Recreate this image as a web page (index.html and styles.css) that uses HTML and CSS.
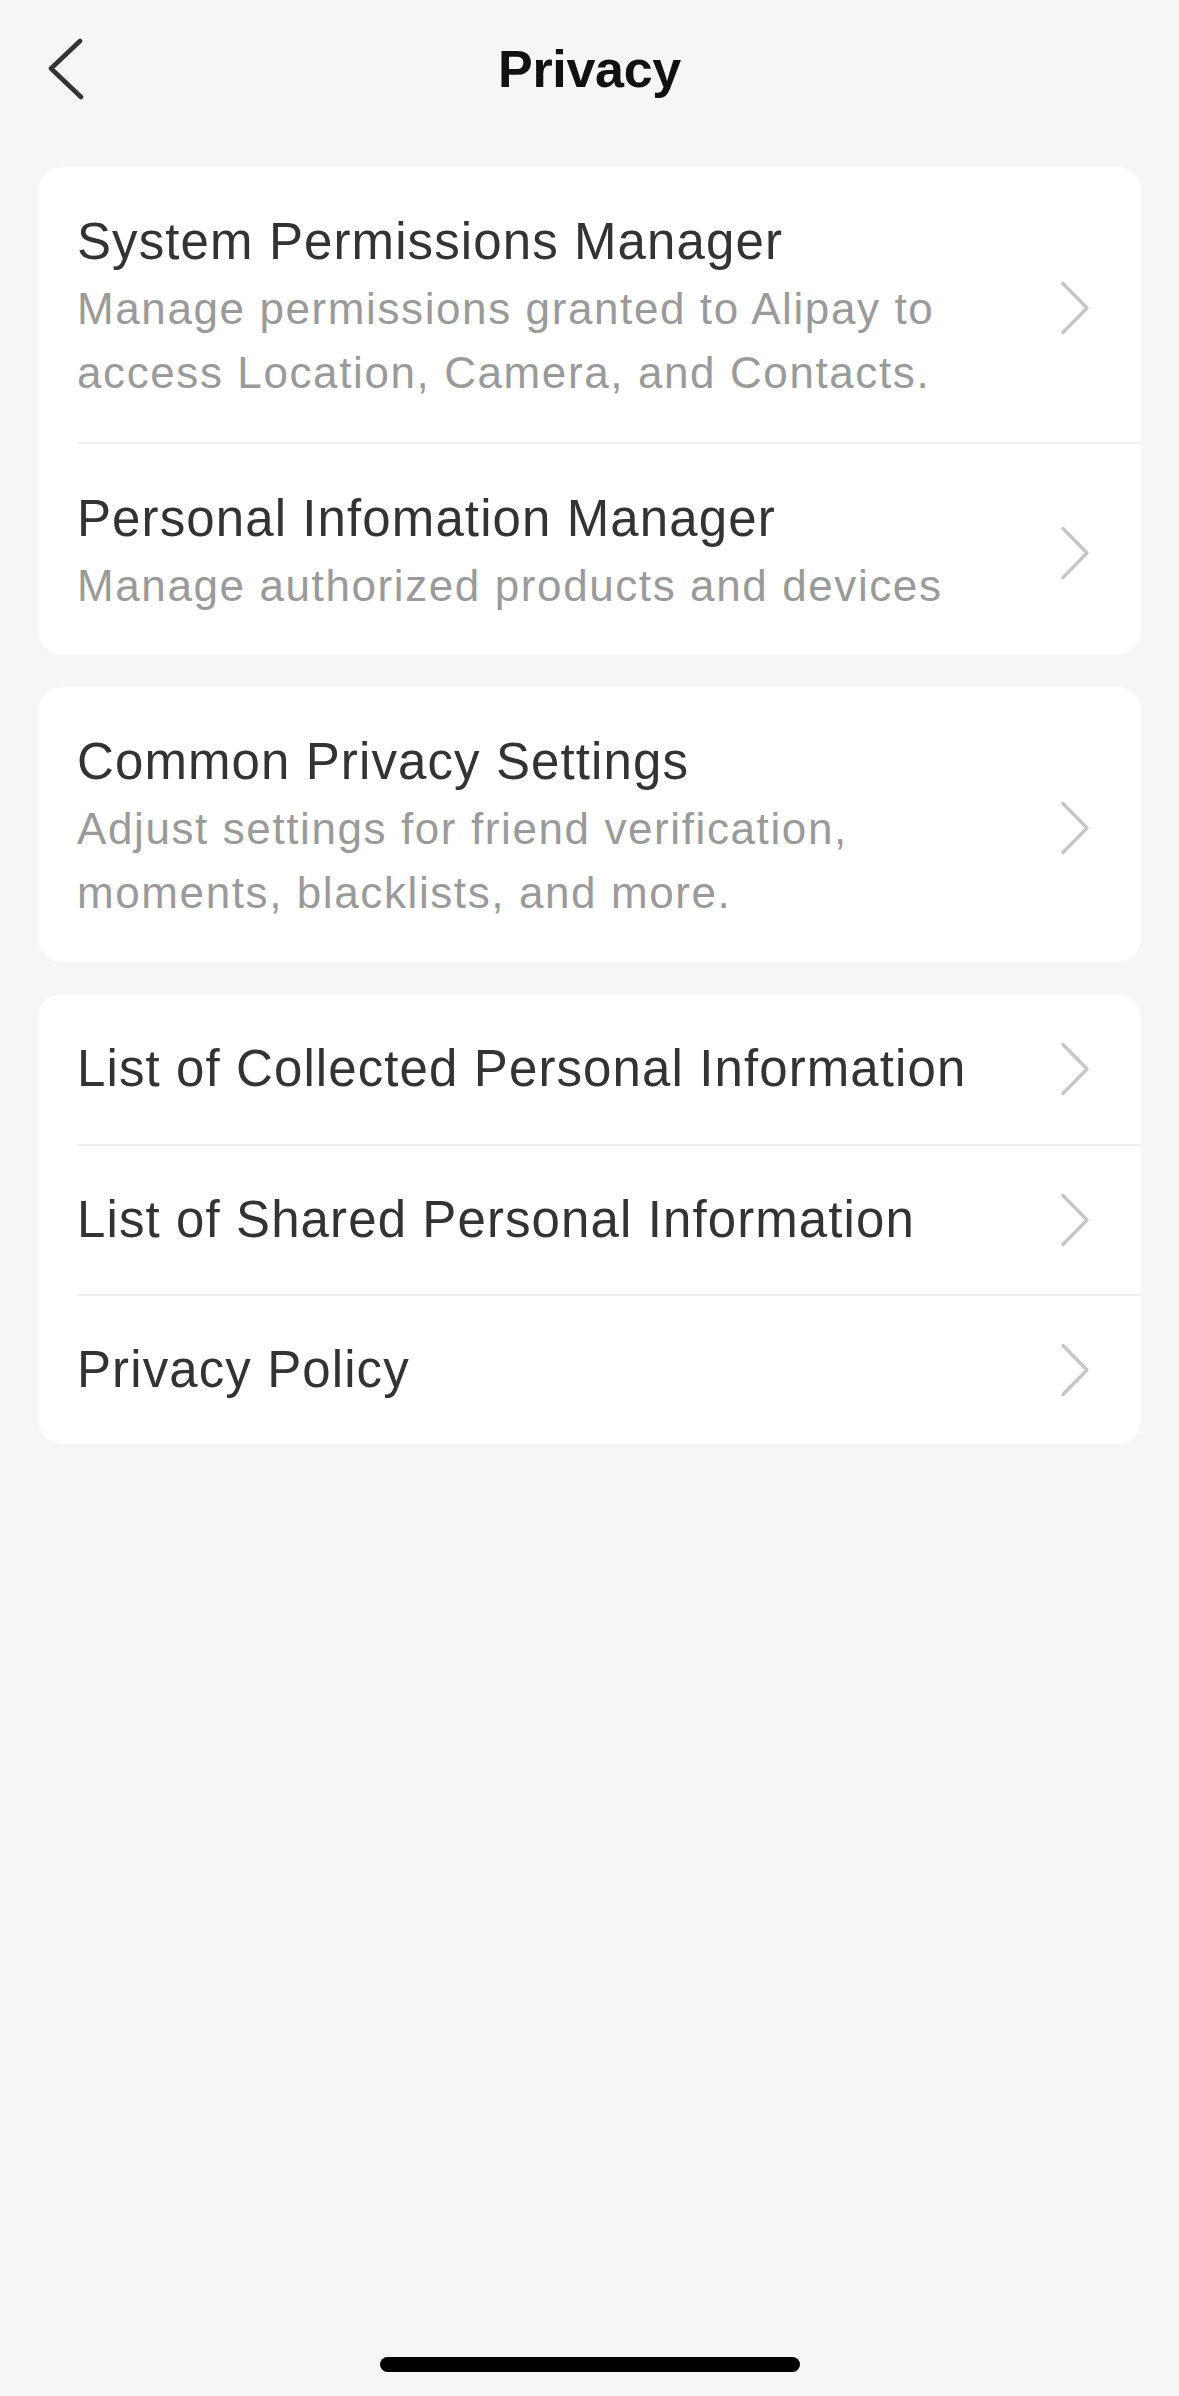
FILE: index.html
```html
<!DOCTYPE html>
<html lang="en">
<head>
<meta charset="utf-8">
<title>Privacy</title>
<link rel="stylesheet" href="styles.css">
</head>
<body>
<div class="page">
  <header class="topbar">
    <div class="back">
      <svg width="46" height="62" viewBox="0 0 46 62" aria-hidden="true">
        <path d="M37 3 L8 30.5 L38 59" fill="none" stroke="#333" stroke-width="4.6" stroke-linecap="round" stroke-linejoin="round"/>
      </svg>
    </div>
    <h1 class="title">Privacy</h1>
    <div class="spacer"></div>
  </header>

  <main class="content">
    <section class="card">
      <div class="row row-desc">
        <div class="text">
          <div class="row-title">System Permissions Manager</div>
          <div class="row-sub">Manage permissions granted to Alipay to access Location, Camera, and Contacts.</div>
        </div>
        <svg class="chev" width="34" height="54" viewBox="0 0 34 54" aria-hidden="true"><path d="M5 2.5 L29 27 L5 51.5" fill="none" stroke="#c6c6c6" stroke-width="3.4" stroke-linecap="round" stroke-linejoin="round"/></svg>
      </div>
      <div class="row row-desc">
        <div class="text">
          <div class="row-title">Personal Infomation Manager</div>
          <div class="row-sub">Manage authorized products and devices</div>
        </div>
        <svg class="chev" width="34" height="54" viewBox="0 0 34 54" aria-hidden="true"><path d="M5 2.5 L29 27 L5 51.5" fill="none" stroke="#c6c6c6" stroke-width="3.4" stroke-linecap="round" stroke-linejoin="round"/></svg>
      </div>
    </section>

    <section class="card">
      <div class="row row-desc">
        <div class="text">
          <div class="row-title">Common Privacy Settings</div>
          <div class="row-sub">Adjust settings for friend verification, moments, blacklists, and more.</div>
        </div>
        <svg class="chev" width="34" height="54" viewBox="0 0 34 54" aria-hidden="true"><path d="M5 2.5 L29 27 L5 51.5" fill="none" stroke="#c6c6c6" stroke-width="3.4" stroke-linecap="round" stroke-linejoin="round"/></svg>
      </div>
    </section>

    <section class="card">
      <div class="row row-simple">
        <div class="text">
          <div class="row-title">List of Collected Personal Information</div>
        </div>
        <svg class="chev" width="34" height="54" viewBox="0 0 34 54" aria-hidden="true"><path d="M5 2.5 L29 27 L5 51.5" fill="none" stroke="#c6c6c6" stroke-width="3.4" stroke-linecap="round" stroke-linejoin="round"/></svg>
      </div>
      <div class="row row-simple">
        <div class="text">
          <div class="row-title">List of Shared Personal Information</div>
        </div>
        <svg class="chev" width="34" height="54" viewBox="0 0 34 54" aria-hidden="true"><path d="M5 2.5 L29 27 L5 51.5" fill="none" stroke="#c6c6c6" stroke-width="3.4" stroke-linecap="round" stroke-linejoin="round"/></svg>
      </div>
      <div class="row row-simple">
        <div class="text">
          <div class="row-title">Privacy Policy</div>
        </div>
        <svg class="chev" width="34" height="54" viewBox="0 0 34 54" aria-hidden="true"><path d="M5 2.5 L29 27 L5 51.5" fill="none" stroke="#c6c6c6" stroke-width="3.4" stroke-linecap="round" stroke-linejoin="round"/></svg>
      </div>
    </section>
  </main>

  <div class="home-indicator"></div>
</div>
</body>
</html>
```

FILE: styles.css
```css
* {
  box-sizing: border-box;
}

html, body {
  margin: 0;
  padding: 0;
  background: #f6f6f6;
}

body {
  font-family: "Liberation Sans", Arial, "Noto Sans", sans-serif;
  color: #333;
}

.page {
  width: 1179px;
  height: 2396px;
  display: flex;
  flex-direction: column;
  background: #f6f6f6;
  overflow: hidden;
}

.topbar {
  display: grid;
  grid-template-columns: 1fr auto 1fr;
  align-items: center;
  padding-top: 37px;
  height: 101px;
}

.back {
  display: flex;
  align-items: center;
  padding-left: 43px;
  height: 64px;
}

.title {
  margin: 0;
  font-size: 52px;
  line-height: 64px;
  font-weight: 700;
  color: #111;
  letter-spacing: -0.3px;
}

.content {
  flex: 1;
  display: flex;
  flex-direction: column;
  gap: 32px;
  padding: 66px 38px 0 38px;
}

.card {
  background: #fff;
  border-radius: 24px;
  overflow: hidden;
  display: flex;
  flex-direction: column;
}

.row {
  display: flex;
  align-items: center;
  margin-left: 39px;
}

.row + .row {
  border-top: 2px solid #efefef;
}

.row-desc {
  padding: 43px 0 37px 0;
}

.row-simple {
  height: 150px;
}

.text {
  flex: 1;
  margin-right: 66px;
  min-width: 0;
}

.row-title {
  font-size: 51px;
  line-height: 64px;
  letter-spacing: 1.1px;
  color: #333;
}

.row-desc .row-title {
  margin-bottom: 3px;
}

.row-sub {
  font-size: 44px;
  line-height: 64px;
  letter-spacing: 1.6px;
  color: #9a9a9a;
}

.chev {
  flex: none;
  margin-right: 49px;
}

.home-indicator {
  align-self: center;
  width: 420px;
  height: 15px;
  border-radius: 8px;
  background: #000;
  margin-bottom: 24px;
}
```
